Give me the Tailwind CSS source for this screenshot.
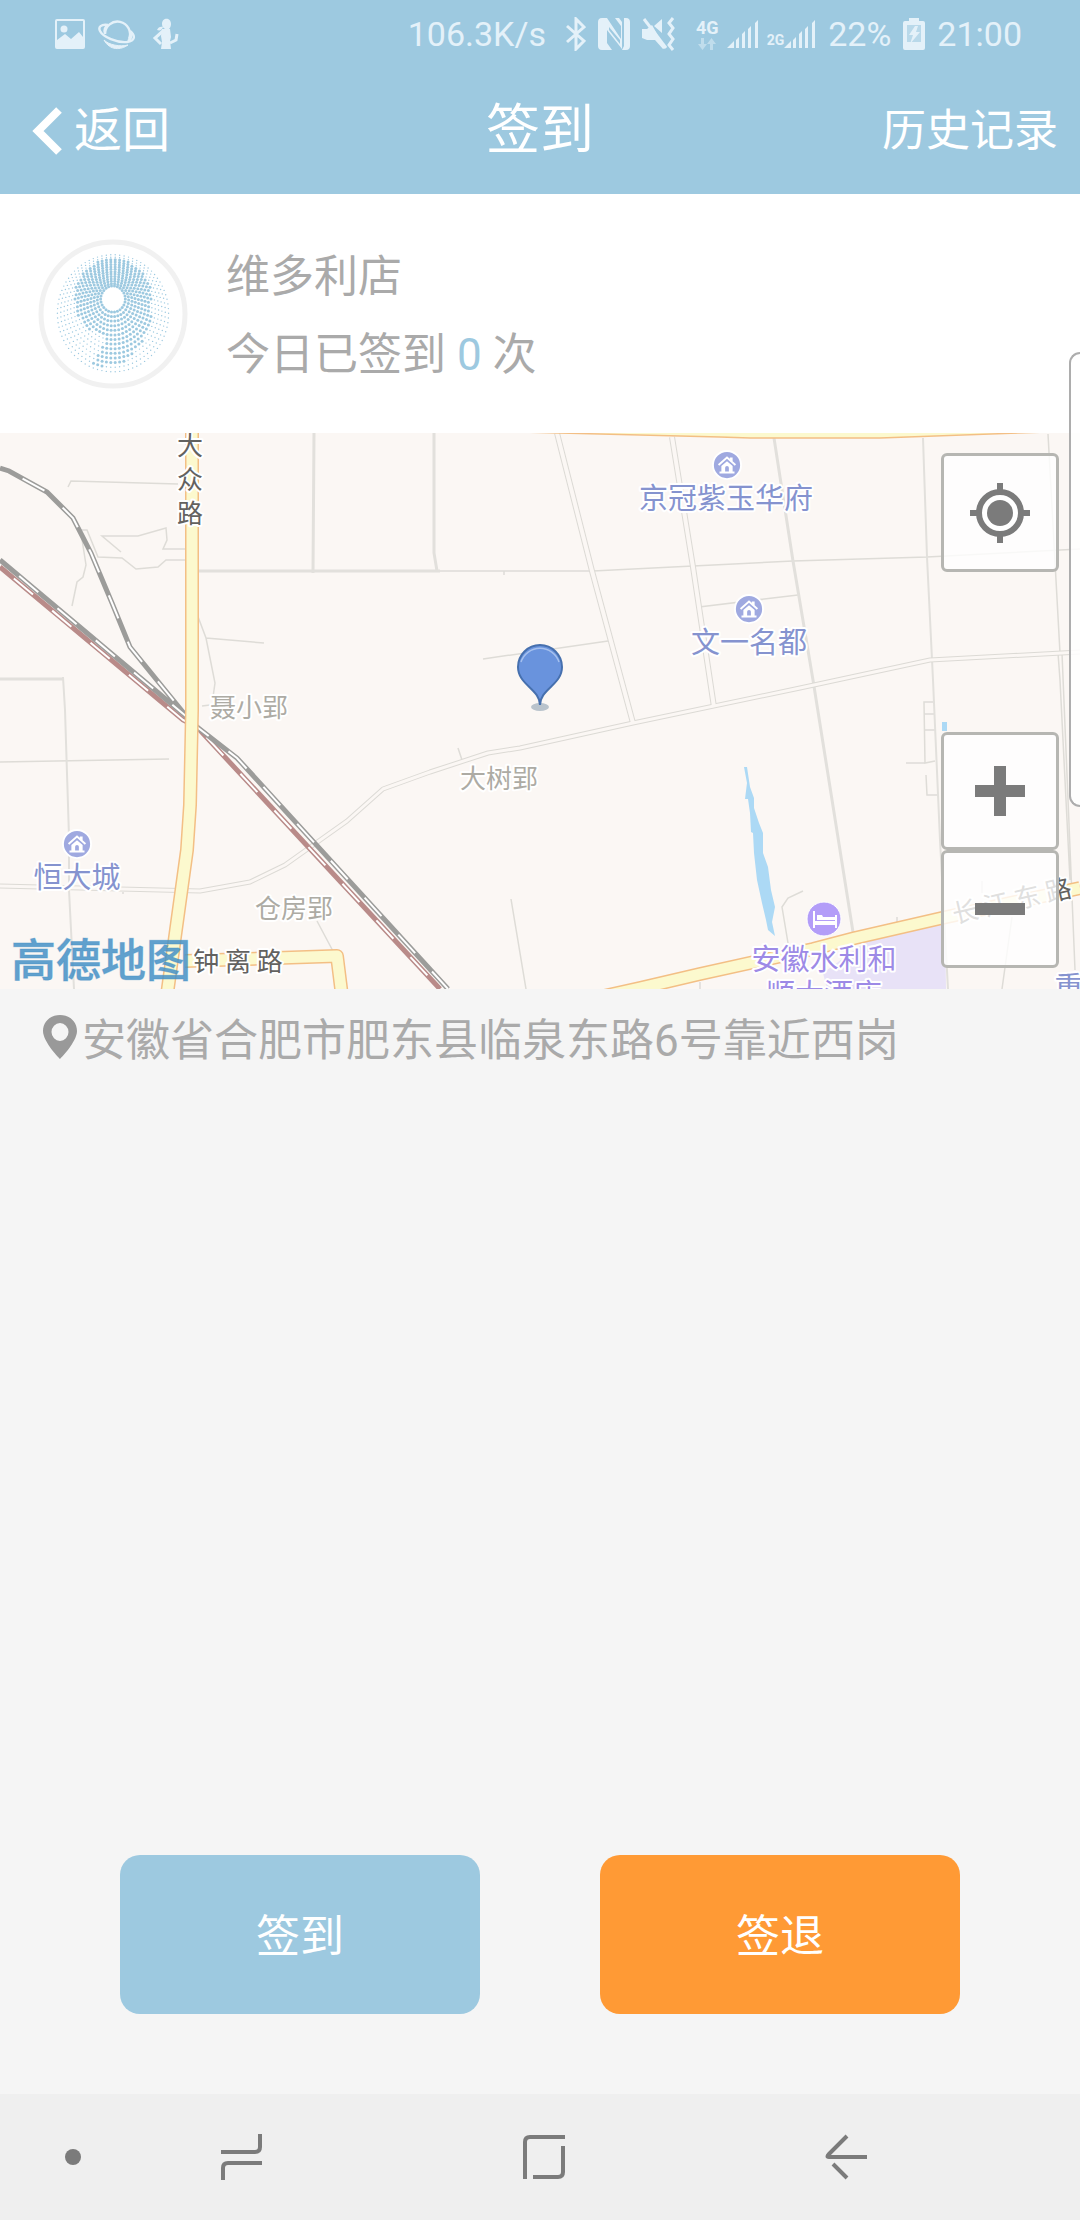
<!DOCTYPE html>
<html lang="zh-CN">
<head>
    <meta charset="UTF-8">
    <meta name="viewport" content="width=device-width, initial-scale=1">
    <title>签到</title>
    <script src="https://cdn.jsdelivr.net/npm/@tailwindcss/browser@4"></script>
</head>
<body class="bg-[#f5f5f5] min-h-screen flex flex-col relative overflow-x-hidden font-[Roboto,'Noto_Sans_CJK_SC',sans-serif]">

    <header class="bg-[#9dc9e0] text-white">
        <!-- Status bar -->
        <div class="h-16 pt-1 pl-[54px] pr-[58px] flex items-center justify-between text-[34px] text-[#e4f1f9]">
            <div class="flex items-center gap-3">
                <svg class="w-8 h-8" viewBox="0 0 32 32" fill="currentColor"><path fill-rule="evenodd" d="M3 1h26a2 2 0 0 1 2 2v26a2 2 0 0 1-2 2H3a2 2 0 0 1-2-2V3a2 2 0 0 1 2-2zm0 2v19l8-6 6 5 8-7 4 5V3z"/><circle cx="10" cy="11" r="3.5"/></svg>
                <svg class="w-[38px] h-8" viewBox="0 0 38 32" fill="none" stroke="currentColor" stroke-width="2.4"><path d="M7 16a12.500 12.500 0 1 1 24 5"/><path d="M10 7C3 6 0 9 2 13c3 6 17 12 27 11 8-1 9-6 3-11"/><path d="M7 15c-1-3 0-6 3-8M33 14c1 4 0 7-3 9"/><path d="M6 22c5 5 16 7 24 5-7 5-18 6-24-5z" fill="currentColor" stroke-width="1"/></svg>
                <svg class="w-7 h-8 ml-1" viewBox="0 0 28 32" fill="currentColor"><path d="M10 6c0-7 9-7 9 0 0 2-1 4-2 5h-4c-2-1-3-3-3-5zM5 12c1-3 4-4 6-3-1 3-3 4-6 3z"/><path d="M10 11h8l1 8-1 4 1 8H9l1-7-1-6z"/><path d="M11 13l-8 7 6 6M18 25l6-3 1-6" fill="none" stroke="currentColor" stroke-width="3"/></svg>
            </div>
            <div class="flex items-center gap-3">
                <span class="mr-2">106.3K/s</span>
                <svg class="w-5 h-[34px]" viewBox="0 0 20 34" fill="none" stroke="currentColor" stroke-width="3"><path d="M1 9l17 15-8 8V2l8 8L1 25"/></svg>
                <svg class="w-8 h-[34px]" viewBox="0 0 32 34" fill="currentColor"><path d="M4 1h5l14 21V9L17 1h4l3 4v27L9 13v13l5 7H4c-3 0-4-2-4-4V5c0-2 1-4 4-4zM26 1h2c3 0 4 2 4 4v24c0 2-1 4-4 4h-4l2-4z"/><path d="M11 10l11 13v4L11 13z" fill="#9dc9e0"/></svg>
                <svg class="w-[34px] h-[34px]" viewBox="0 0 34 34" fill="currentColor"><path d="M0 12h5l5-4 13 23-2 1-8-9H5l-5-2zM12 9l8-7v14z"/><path d="M2 2l22 29" stroke="currentColor" stroke-width="3"/><path d="M31 1l-4 5 4 5-4 6 4 5-4 6 4 5" fill="none" stroke="currentColor" stroke-width="3"/></svg>
                <div class="flex items-center gap-2 ml-2">
                    <div class="flex flex-col items-center">
                        <span class="text-[18px] leading-5 font-bold">4G</span>
                        <svg class="w-5 h-3" viewBox="0 0 20 12" fill="currentColor" opacity=".5"><path d="M4 0h3v6h3l-4.500 6L1 6h3zM13 12h3V6h3l-4.500-6L10 6h3z"/></svg>
                    </div>
                    <svg class="w-8 h-7" viewBox="0 0 32 28" fill="currentColor"><path d="M0 28l7-7v7zM9 20l3-3v11H9zM15 14l3-3v17h-3zM21 9l3-3v22h-3zM28 3l3-3v28h-3z"/></svg>
                    <div class="flex items-end h-7">
                        <span class="text-[14px] leading-4 font-bold">2G</span>
                        <svg class="w-8 h-7" viewBox="0 0 32 28" fill="currentColor"><path d="M0 28l7-7v7zM9 20l3-3v11H9zM15 14l3-3v17h-3zM21 9l3-3v22h-3zM28 3l3-3v28h-3z"/></svg>
                    </div>
                </div>
                <span>22%</span>
                <svg class="w-[22px] h-8" viewBox="0 0 22 32"><path d="M2 3h4V0h10v3h4a2 2 0 0 1 2 2v25a2 2 0 0 1-2 2H2a2 2 0 0 1-2-2V5a2 2 0 0 1 2-2z" fill="currentColor"/><path d="M4 7h14v17H4z" fill="#b9d9ea"/><path d="M12 8l-6 9h4l-3 9 10-12h-4l2-6z" fill="currentColor"/></svg>
                <span>21:00</span>
            </div>
        </div>

        <!-- Title bar -->
        <div class="h-[130px] pt-1 px-[22px] grid grid-cols-3 items-center">
            <button type="button" class="flex items-center gap-2 pl-2 text-[48px] leading-[60px]">
                <svg class="w-9 h-12" viewBox="0 0 36 48" fill="none" stroke="currentColor" stroke-width="8"><path d="M29 3L8 24l21 21"/></svg>
                返回
            </button>
            <h1 class="text-center text-[54px] leading-[60px]">签到</h1>
            <a href="#history" class="text-right text-[44px] leading-[60px]">历史记录</a>
        </div>
    </header>

    <section class="bg-white h-[239px] px-[38px] flex items-center gap-[38px] text-[44px] leading-[78px] text-[#aaaaaa]">
        <svg id="avatar" class="w-[150px] h-[150px] shrink-0" viewBox="0 0 150 150">
            <circle cx="75" cy="75" r="72" fill="#fff" stroke="#f1f1f1" stroke-width="5"/>
            <g id="dots" fill="#9dc9e0"></g>
        </svg>
        <div class="pt-1">
            <p>维多利店</p>
            <p>今日已签到 <span class="text-[#9dc9e0]">0</span> 次</p>
        </div>
    </section>

    <section class="relative h-[556px] overflow-hidden bg-[#fbf7f4]">
        <svg class="w-full h-full" viewBox="0 0 1080 556" preserveAspectRatio="xMidYMid slice" font-family="'Noto Sans CJK SC', sans-serif">
            <defs>
                <symbol id="house" viewBox="0 0 32 32">
                    <circle cx="16" cy="16" r="15" fill="#9fa9e0" stroke="#fff" stroke-width="2"/>
                    <path d="M7 16l9-8 9 8" fill="none" stroke="#fff" stroke-width="2"/>
                    <path d="M19 8h3v4h-3zM10 17l6-5 6 5v6h2v2H8v-2h2zm4 6h4v-4a2 2 0 0 0-4 0z" fill="#fff" fill-rule="evenodd"/>
                </symbol>
            </defs>

            <path d="M823 540L867 508 945 490 946 556H827z" fill="#e8e2f7"/>
            <path d="M744 334h3l3 20 4 11v10l5 15 4 10v20l5 14 3 23 4 17-3 15 3 14-7-6-2-10-4-17-5-23-3-27-1-20-2-1-1-19-2-14h-3l2-16zM942 289h5v9h-5z" fill="#acd9f5"/>

            <!-- Lanes -->
            <g fill="none" stroke="#dedcd7" stroke-width="1.500">
                <path d="M68 54l3-6 107 3M121 119l-19-16h36l28-8 1 12-4 9h23M80 97h7l11 27 24 1 14 11 22-2 8-7h20M81 100l5 32-3 12-6 5-5 24"/>
                <path d="M197 181l9 24 9 45-2 14M206 205l58 5M202 273l8-1M0 329l169-3M122 460h2"/>
                <path d="M440 138h153l100-5 100-5 134-4 153-8M504 138v4M483 226l125-18M699 174l99-12M458 315l4 12"/>
                <path d="M935 269h-11l1 61 10-2M924 281h11M925 297h11M906 330h19M926 342l1 20h11"/>
                <path d="M788 510l-6-36 6-9 15-7M1012 484l-10 72M511 466l15 90M317 488l17 32M897 484v6M700 549v7M982 448v12"/>
                <path d="M1048 1l12 219M1058 220l2 27 10 200M1062 220l13 317"/>
            </g>
            <g fill="none" stroke="#e2e0dc" stroke-width="3">
                <path d="M314 0l-1 140M198 138h242M434 0v120l3 18M0 246h63M774 5l19 123 20 119 40 252"/>
                <path d="M63 244l2 33 4 127v53l5 99M923 5l4 119 6 123 7 160 8 149" stroke-width="2"/>
            </g>
            <g fill="none" stroke-linejoin="round">
                <path d="M0 453l200 5 50-9 35-17 62-44 36-32 47-17 58-19 32-5 113-25 167-35 130-28 150-8" stroke="#dcdad5" stroke-width="5"/>
                <path d="M557 0l35 138 41 152M672 4l21 130 21 140" stroke="#dcdad5" stroke-width="6"/>
                <path d="M557 0l35 138 41 152M672 4l21 130 21 140" stroke="#fbf7f4" stroke-width="4"/>
                <path d="M0 453l200 5 50-9 35-17 62-44 36-32 47-17 58-19 32-5 113-25 167-35 130-28 150-8" stroke="#fbf7f4" stroke-width="3"/>
            </g>

            <!-- Railways -->
            <g fill="none">
                <path d="M0 134L183 287l14 7 243 262" stroke="#b98b89" stroke-width="5"/>
                <path d="M0 134L183 287l14 7 243 262" stroke="#fff" stroke-width="2" stroke-dasharray="25 25" stroke-dashoffset="-18"/>
                <path d="M0 127L187 284M0 35l9 3 38 21 26 26 18 35 21 50 18 44 57 70 10 10 40 31 211 231" stroke="#9c9c9a" stroke-width="5"/>
                <path d="M0 127L187 284M0 35l9 3 38 21 26 26 18 35 21 50 18 44 57 70 10 10 40 31 211 231" stroke="#fff" stroke-width="2" stroke-dasharray="25 25" stroke-dashoffset="-25"/>
            </g>

            <!-- Main roads -->
            <g fill="none" stroke-linejoin="round">
                <path d="M192-5v282l-2 95-3 45-20 145M185 528l152-5 5 40M600 564l40-9 60-14 113-25 42-11 87-20 138-30" stroke="#f3bf85" stroke-width="14"/>
                <path d="M192-5v282l-2 95-3 45-20 145M185 528l152-5 5 40M600 564l40-9 60-14 113-25 42-11 87-20 138-30" stroke="#fcf9ce" stroke-width="11"/>
                <path d="M520-1l200 5 30 1h130l167-6" fill="#fcf9ce" stroke="#f3bf85" stroke-width="1.500"/>
            </g>

            <use href="#house" x="62" y="396" width="30" height="30"/>
            <use href="#house" x="712" y="17" width="30" height="30"/>
            <use href="#house" x="734" y="161" width="30" height="30"/>
            <circle cx="824" cy="486" r="17" fill="#b39df8" stroke="#fff" stroke-width="1"/>
            <path d="M813 478h2v10h20v-6h2v13h-2v-3h-20v3h-2zM817 482h5l1 2h12v3h-18z" fill="#fff"/>

            <g text-anchor="middle" stroke="#fff" stroke-width="4" stroke-linejoin="round" paint-order="stroke">
                <g font-size="29" fill="#8593cf">
                    <text x="77" y="455">恒大城</text>
                    <text x="726" y="76">京冠紫玉华府</text>
                    <text x="749" y="220">文一名都</text>
                    <text x="1069" y="565">重</text>
                </g>
                <g font-size="29" fill="#9d8ae6">
                    <text x="824" y="537">安徽水利和</text>
                    <text x="824" y="572">顺大酒店</text>
                </g>
                <g font-size="26" fill="#adaba4">
                    <text x="249" y="284">聂小郢</text>
                    <text x="499" y="355">大树郢</text>
                    <text x="294" y="485">仓房郢</text>
                </g>
                <g font-size="26" fill="#636260">
                    <text x="190" y="22">大</text>
                    <text x="190" y="56">众</text>
                    <text x="190" y="90">路</text>
                    <text x="238" y="538">钟 离 路</text>
                    <text transform="translate(1014 477) rotate(-13)">长 江 东 路</text>
                </g>
            </g>
            <text x="11" y="544" font-size="45" font-weight="500" fill="#4490c6" fill-opacity=".85" stroke="#4490c6" stroke-opacity=".4" stroke-width="1">高德地图</text>

            <!-- Current position -->
            <ellipse cx="540" cy="274" rx="9" ry="4" fill="#b9c3cc"/>
            <path d="M540 272c0-16-22-20-22-38a22 22 0 0 1 44 0c0 18-22 22-22 38z" fill="#6993dd" stroke="#4670ae" stroke-width="2"/>
            <path d="M521 229a20 20 0 0 1 38 0" fill="none" stroke="#a5c0ee" stroke-width="1.500"/>
        </svg>

        <button type="button" aria-label="定位" class="absolute right-[21px] top-5 w-[118px] h-[119px] flex items-center justify-center rounded-md border-3 border-[#b6b6b2] bg-white/80">
            <svg class="w-[60px] h-[60px]" viewBox="0 0 60 60" fill="#7b7b7b"><circle cx="30" cy="30" r="21" fill="#fff" stroke="#7b7b7b" stroke-width="6"/><circle cx="30" cy="30" r="13"/><path d="M27 0h6v8h-6zM27 52h6v8h-6zM0 27h8v6H0zM52 27h8v6h-8z"/></svg>
        </button>
        <div class="absolute right-[21px] bottom-[21px] flex flex-col">
            <button type="button" aria-label="放大" class="w-[118px] h-[118px] flex items-center justify-center rounded-md border-3 border-[#b6b6b2] bg-white/80">
                <svg class="w-[50px] h-[50px]" viewBox="0 0 50 50"><path d="M19 0h12v19h19v12H31v19H19V31H0V19h19z" fill="#7b7b7b"/></svg>
            </button>
            <button type="button" aria-label="缩小" class="w-[118px] h-[118px] flex items-center justify-center rounded-md border-3 border-[#b6b6b2] bg-white/80">
                <svg class="w-[50px] h-3" viewBox="0 0 50 12"><path d="M0 0h50v12H0z" fill="#7b7b7b"/></svg>
            </button>
        </div>
    </section>

    <!-- Edge panel handle -->
    <div class="absolute right-0 top-[352px] w-[11px] h-[455px] rounded-l-[14px] border-2 border-r-0 border-[#adadad] bg-white/85"></div>

    <main class="flex-1 flex flex-col">
        <p class="px-[42px] pt-3 pb-1 flex items-center gap-1 text-[44px] leading-[80px] text-[#aaaaaa]">
            <svg class="w-9 h-11 mb-2 shrink-0" viewBox="0 0 36 44"><path d="M18 0C8 0 1 7 1 16c0 11 17 28 17 28s17-17 17-28C35 7 28 0 18 0zm0 8a8.500 9 0 0 1 0 18 8.500 9 0 0 1 0-18z" fill="#999" fill-rule="evenodd"/></svg>
            安徽省合肥市肥东县临泉东路6号靠近西岗
        </p>
        <div class="mt-auto mb-20 px-[120px] grid grid-cols-2 gap-[120px] text-[44px] text-white">
            <button type="button" class="h-[159px] pt-1 rounded-[20px] bg-[#9dc9e0]">签到</button>
            <button type="button" class="h-[159px] pt-1 rounded-[20px] bg-[#ff9a35]">签退</button>
        </div>
    </main>

    <!-- System navigation -->
    <nav class="h-[126px] bg-[#efefef] flex items-center pl-[55px] pr-[83px] text-[#7b7b7b]">
        <button type="button" aria-label="显示" class="w-9 h-12 flex items-center justify-center"><span class="w-4 h-4 rounded-full bg-[#7b7b7b]"></span></button>
        <button type="button" aria-label="最近" class="flex-1 flex justify-center">
            <svg class="w-[42px] h-12" viewBox="0 0 42 48" fill="none" stroke="currentColor" stroke-width="4"><path d="M39 1v13q0 5-5 5H0M2 47V35q0-5 5-5h34"/></svg>
        </button>
        <button type="button" aria-label="主页" class="flex-1 flex justify-center">
            <svg class="w-[42px] h-11" viewBox="0 0 42 44" fill="none" stroke="currentColor" stroke-width="4"><path d="M2 44V7q0-5 5-5h35M40 11v26q0 5-5 5H10"/></svg>
        </button>
        <button type="button" aria-label="返回" class="flex-1 flex justify-center">
            <svg class="w-[42px] h-[46px]" viewBox="0 0 42 46" fill="none" stroke="currentColor" stroke-width="4"><path d="M22 2L4 20q-3 3 0 3h38M8 30l14 14"/></svg>
        </button>
    </nav>

    <script>
        // Halftone "9": rings of dots, larger where they fall inside the digit
        const dots = document.getElementById('dots');

        function insideNine(x, y) {
            const d = Math.hypot(x - 75, y - 59);
            if (d < 39) return true;
            // tail below the bowl
            const left = y < 98 ? 70 : 70 - (y - 98) * 0.6;
            const right = 114 - (y - 75) * (y - 75) / 80;
            return y > 75 && y < 127 && x > left && x < right;
        }

        let circles = '';
        for (let i = 0; i < 14; i++) {
            const r = 13 + i * 3.5;
            const cy = 60 + i * 1.1;
            const count = 26 + i * 4;
            for (let j = 0; j < count; j++) {
                const a = (j / count) * Math.PI * 2;
                const x = 75 + Math.cos(a) * r * 0.95;
                const y = cy + Math.sin(a) * r;
                const size = insideNine(x, y) ? 1.5 : 0.7;
                circles += `<circle cx="${x.toFixed(1)}" cy="${y.toFixed(1)}" r="${size}"/>`;
            }
        }
        dots.innerHTML = circles;
    </script>

</body>
</html>
